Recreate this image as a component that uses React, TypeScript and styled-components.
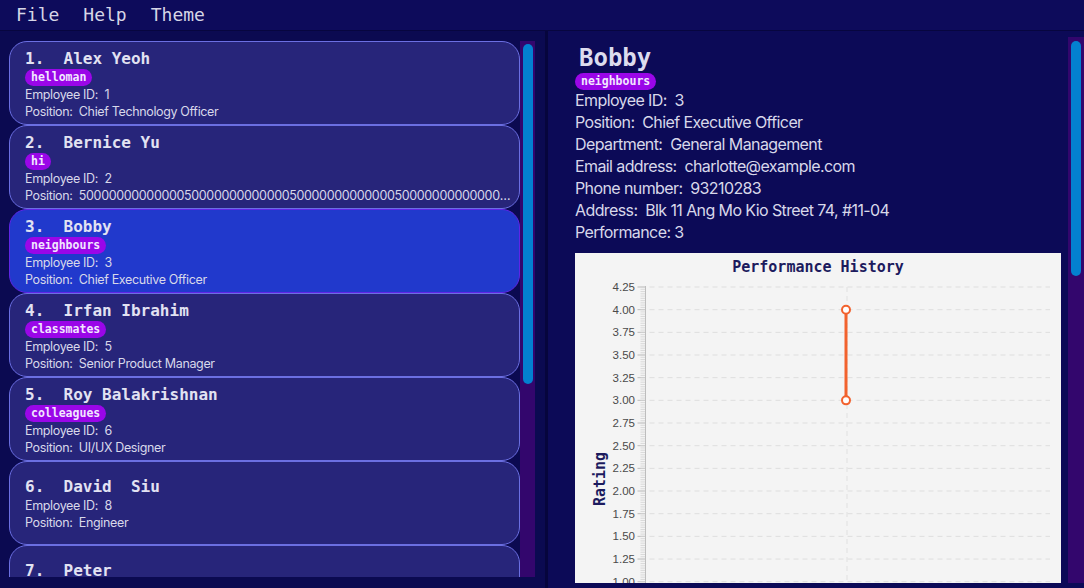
import React from "react";
import styled, { createGlobalStyle } from "styled-components";

const GlobalStyle = createGlobalStyle`
  html, body { margin: 0; padding: 0; background: #0c0a57; overflow: hidden; }
  * { box-sizing: border-box; }
`;

const MONO = `"DejaVu Sans Mono", "Liberation Mono", monospace`;
const SANS = `Inter, "Noto Sans", sans-serif`;

const Shell = styled.div`
  width: 1084px;
  height: 588px;
  display: flex;
  flex-direction: column;
  background: #0c0a57;
`;

const MenuBar = styled.div`
  height: 31px;
  flex: none;
  display: flex;
  align-items: center;
  padding-left: 4px;
  background: #0d0b5b;
  border-bottom: 1px solid #07063f;
`;

const MenuItem = styled.div`
  font-family: ${MONO};
  font-size: 18px;
  color: #d6d6e6;
  padding: 0 12px;
  line-height: 28px;
`;

const Main = styled.div`
  flex: 1;
  display: flex;
  min-height: 0;
`;

const LeftPane = styled.div`
  width: 545px;
  flex: none;
  display: flex;
  flex-direction: column;
  background: #0b0a51;
`;

const ListArea = styled.div`
  height: 536px;
  margin: 10px 10px 0 9px;
  display: flex;
  overflow: hidden;
`;

const CardColumn = styled.div`
  flex: 1;
  display: flex;
  flex-direction: column;
  min-width: 0;
`;

const Card = styled.div<{ $selected?: boolean }>`
  height: 84px;
  flex: none;
  border-radius: 18px;
  border: 1.5px solid ${(p) => (p.$selected ? "#5f25e6" : "#6b6fe2")};
  background: ${(p) => (p.$selected ? "#2139cc" : "#27257a")};
  padding: 2px 8px 0 15px;
  display: flex;
  flex-direction: column;
  justify-content: center;
  color: #dcdcee;
`;

const CardName = styled.div`
  font-family: ${MONO};
  font-weight: bold;
  font-size: 16px;
  line-height: 20px;
  white-space: pre;
  color: #e2e2f2;
`;

const Tags = styled.div`
  display: flex;
  gap: 4px;
`;

const Tag = styled.span`
  font-family: ${MONO};
  font-weight: bold;
  font-size: 11.5px;
  line-height: 17px;
  height: 17px;
  padding: 0 6px;
  border-radius: 9px;
  background: #9a06e8;
  color: #f2e6ff;
`;

const CardLine = styled.div`
  font-family: ${SANS};
  font-size: 12.5px;
  letter-spacing: -0.35px;
  line-height: 17px;
  white-space: pre;
  overflow: hidden;
  text-overflow: ellipsis;
  color: #d8d8ea;
`;

const ScrollTrack = styled.div<{ $h: number }>`
  width: 15px;
  flex: none;
  height: ${(p) => p.$h}px;
  background: #33066d;
  padding: 3px 2px 0 3px;
`;

const ScrollThumb = styled.div<{ $h: number }>`
  height: ${(p) => p.$h}px;
  border-radius: 5px;
  background: #0380d0;
`;

const Divider = styled.div`
  width: 3px;
  flex: none;
  background: #06053d;
`;

const RightPane = styled.div`
  flex: 1;
  display: flex;
  padding: 6px 0 5px 27px;
  min-width: 0;
`;

const Detail = styled.div`
  flex: 1;
  display: flex;
  flex-direction: column;
  align-items: flex-start;
  overflow: hidden;
  padding-right: 6px;
`;

const BigName = styled.div`
  font-family: ${MONO};
  font-weight: bold;
  font-size: 24px;
  line-height: 30px;
  padding-left: 4px;
  margin-top: 6px;
  color: #dcdcee;
`;

const DetailTags = styled(Tags)`
  margin-bottom: -1px;
`;

const DetailLine = styled.div`
  font-family: ${SANS};
  font-size: 16px;
  letter-spacing: -0.6px;
  line-height: 22px;
  white-space: pre;
  color: #d8d8ea;
`;

const Chart = styled.div`
  margin-top: 10px;
  width: 487px;
  flex: none;
  background: #f4f4f4;
  margin-left: -1px;
`;

const RightTrack = styled.div`
  width: 16px;
  flex: none;
  background: #33066d;
  padding: 4px 3px 0 3px;
`;

type Person = {
  n: number;
  name: string;
  tag?: string;
  id: number;
  pos: string;
  sel?: boolean;
};

const people: Person[] = [
  { n: 1, name: "Alex Yeoh", tag: "helloman", id: 1, pos: "Chief Technology Officer" },
  { n: 2, name: "Bernice Yu", tag: "hi", id: 2, pos: "5000000000000050000000000000500000000000005000000000000050000000000000" },
  { n: 3, name: "Bobby", tag: "neighbours", id: 3, pos: "Chief Executive Officer", sel: true },
  { n: 4, name: "Irfan Ibrahim", tag: "classmates", id: 5, pos: "Senior Product Manager" },
  { n: 5, name: "Roy Balakrishnan", tag: "colleagues", id: 6, pos: "UI/UX Designer" },
  { n: 6, name: "David  Siu", id: 8, pos: "Engineer" },
  { n: 7, name: "Peter", id: 9, pos: "Engineer" },
];

const PerfChart: React.FC = () => {
  const top = 34;
  const step = 22.67;
  const axisX = 71.5;
  const right = 476;
  const labels = ["4.25", "4.00", "3.75", "3.50", "3.25", "3.00", "2.75", "2.50", "2.25", "2.00", "1.75", "1.50", "1.25", "1.00"];
  const yOf = (v: number) => top + ((4.25 - v) / 0.25) * step;
  const minor: number[] = [];
  for (let i = 0; i <= 130; i++) minor.push(top + (i * step) / 10);
  return (
    <svg width="487" height="360" viewBox="0 0 487 360" style={{ display: "block" }}>
      <text x="244" y="19" textAnchor="middle" fontFamily={MONO} fontWeight="bold" fontSize="15" fill="#1c1b5e">
        Performance History
      </text>
      {labels.map((l, i) => (
        <g key={l}>
          <line x1={axisX + 4} x2={right} y1={top + i * step} y2={top + i * step} stroke="#dedede" strokeWidth="1" strokeDasharray="5 4" />
          <text x="61" y={top + i * step + 4} textAnchor="end" fontFamily='"Liberation Sans", Arial, sans-serif' fontSize="11.5" fill="#4a4a4a">
            {l}
          </text>
          <line x1={axisX - 8} x2={axisX} y1={top + i * step} y2={top + i * step} stroke="#bdbdbd" strokeWidth="1" />
        </g>
      ))}
      {minor.map((y, i) => (
        <line key={i} x1={axisX - 5} x2={axisX} y1={y} y2={y} stroke="#d2d2d2" strokeWidth="0.8" />
      ))}
      <line x1={axisX} x2={axisX} y1={top - 1} y2={360} stroke="#bdbdbd" strokeWidth="1" />
      <line x1="273" x2="273" y1={top} y2={360} stroke="#e0e0e0" strokeWidth="1" strokeDasharray="5 4" />
      <text
        transform="translate(31 226) rotate(-90)"
        textAnchor="middle"
        fontFamily={MONO}
        fontWeight="bold"
        fontSize="15"
        fill="#1c1b5e"
      >
        Rating
      </text>
      <line x1="272" x2="272" y1={yOf(4)} y2={yOf(3)} stroke="#f2622e" strokeWidth="3" />
      <circle cx="272" cy={yOf(4)} r="4" fill="#ffffff" stroke="#f2622e" strokeWidth="2" />
      <circle cx="272" cy={yOf(3)} r="4" fill="#ffffff" stroke="#f2622e" strokeWidth="2" />
    </svg>
  );
};

export default function App() {
  const sel = people[2];
  return (
    <>
      <GlobalStyle />
      <Shell>
        <MenuBar>
          <MenuItem>File</MenuItem>
          <MenuItem>Help</MenuItem>
          <MenuItem>Theme</MenuItem>
        </MenuBar>
        <Main>
          <LeftPane>
            <ListArea>
              <CardColumn>
                {people.map((p) => (
                  <Card key={p.n} $selected={p.sel}>
                    <CardName>{`${p.n}.  ${p.name}`}</CardName>
                    {p.tag && (
                      <Tags>
                        <Tag>{p.tag}</Tag>
                      </Tags>
                    )}
                    <CardLine>{`Employee ID:  ${p.id}`}</CardLine>
                    <CardLine>{`Position:  ${p.pos}`}</CardLine>
                  </Card>
                ))}
              </CardColumn>
              <ScrollTrack $h={536}>
                <ScrollThumb $h={340} />
              </ScrollTrack>
            </ListArea>
          </LeftPane>
          <Divider />
          <RightPane>
            <Detail>
              <BigName>{sel.name}</BigName>
              <DetailTags>
                <Tag>{sel.tag}</Tag>
              </DetailTags>
              <DetailLine>{"Employee ID:  3"}</DetailLine>
              <DetailLine>{"Position:  Chief Executive Officer"}</DetailLine>
              <DetailLine>{"Department:  General Management"}</DetailLine>
              <DetailLine>{"Email address:  charlotte@example.com"}</DetailLine>
              <DetailLine>{"Phone number:  93210283"}</DetailLine>
              <DetailLine>{"Address:  Blk 11 Ang Mo Kio Street 74, #11-04"}</DetailLine>
              <DetailLine>{"Performance: 3"}</DetailLine>
              <Chart>
                <PerfChart />
              </Chart>
            </Detail>
            <RightTrack>
              <ScrollThumb $h={235} />
            </RightTrack>
          </RightPane>
        </Main>
      </Shell>
    </>
  );
}
